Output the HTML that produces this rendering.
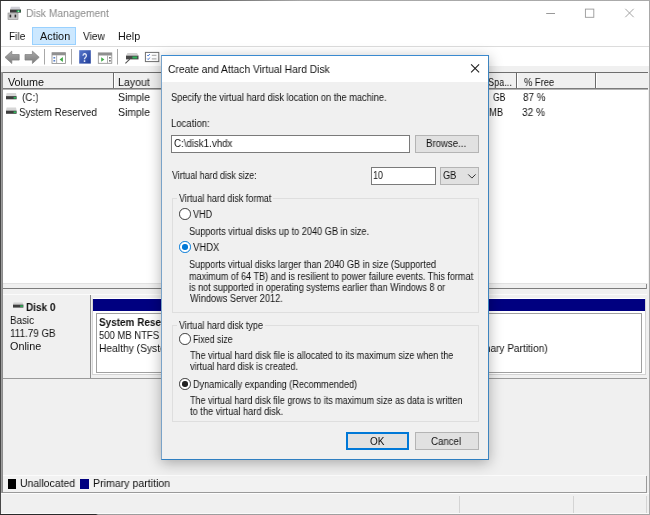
<!DOCTYPE html>
<html lang="en">
<head>
<meta charset="utf-8">
<title>Disk Management</title>
<style>
html,body{margin:0;padding:0}
body{width:650px;height:515px;position:relative;overflow:hidden;background:#f0f0f0;font-family:"Liberation Sans","DejaVu Sans",sans-serif;color:#111}
div,span,svg{position:absolute;box-sizing:border-box}
.t{white-space:pre;transform-origin:0 50%;color:#111;will-change:transform}
.a{left:0;top:0}
</style>
</head>
<body>
<!-- ===== main window chrome ===== -->
<div id="titlebar" style="left:0;top:0;width:650px;height:46px;background:#fff"></div>
<div id="menuline" style="left:0;top:46px;width:650px;height:1px;background:#dcdcdc"></div>
<div id="toolbar" style="left:0;top:47px;width:650px;height:19px;background:#fff"></div>
<div id="menuhi" style="left:32px;top:27px;width:44px;height:18px;background:#cce8ff;border:1px solid #99d1ff"></div>

<!-- title icon -->
<svg style="left:7px;top:6px" width="16" height="15" viewBox="0 0 16 15">
 <rect x="1" y="7" width="10" height="6.6" fill="#c9c9c9" stroke="#8d8d8d" stroke-width=".6"/>
 <rect x="2.6" y="8.6" width="1.6" height="2.8" fill="#333"/>
 <rect x="7.6" y="8.6" width="1.6" height="2.8" fill="#333"/>
 <path d="M3.9 .8h8.7l.9 2.8H3.2z" fill="#cfcfd6"/>
 <rect x="3" y="3.5" width="11" height="3.1" fill="#3c3c3c"/>
 <rect x="9.6" y="4.3" width="3.8" height="1.8" fill="#23a455"/>
 <rect x="10.8" y="4.7" width="1.2" height="1" fill="#d8ffe4"/>
</svg>

<!-- caption buttons -->
<svg style="left:540px;top:4px" width="100" height="18" viewBox="0 0 100 18">
 <path d="M6.2 9.5h8.8" stroke="#999" stroke-width="1" fill="none"/>
 <rect x="45.4" y="5.1" width="8.4" height="8.2" stroke="#999" stroke-width=".9" fill="none"/>
 <path d="M85.3 4.8l8.4 8.4M93.7 4.8l-8.4 8.4" stroke="#999" stroke-width=".9" fill="none"/>
</svg>

<!-- toolbar icons -->
<svg style="left:0;top:47px" width="165" height="20" viewBox="0 0 165 20">
 <defs>
  <linearGradient id="ga" x1="0" y1="0" x2="0" y2="1"><stop offset="0" stop-color="#a9a9a9"/><stop offset="1" stop-color="#7d7d7d"/></linearGradient>
  <linearGradient id="gq" x1="0" y1="0" x2="1" y2="1"><stop offset="0" stop-color="#5878cc"/><stop offset="1" stop-color="#1f3c98"/></linearGradient>
 </defs>
 <path d="M5 10.3l6.8-6.2v3.4h7.4v5.6h-7.4v3.4z" fill="url(#ga)" stroke="#808080" stroke-width=".7"/>
 <path d="M39.2 10.3l-6.8-6.2v3.4h-7.4v5.6h7.4v3.4z" fill="url(#ga)" stroke="#808080" stroke-width=".7"/>
 <rect x="44" y="2" width="1" height="15.5" fill="#a8a8a8"/>
 <rect x="71" y="2" width="1" height="15.5" fill="#a8a8a8"/>
 <rect x="117" y="2" width="1" height="15.5" fill="#a8a8a8"/>
 <!-- icon1 -->
 <rect x="52" y="5.7" width="13.5" height="10.8" fill="#fff" stroke="#8c8c8c" stroke-width=".8"/>
 <rect x="52" y="5.7" width="13.5" height="2.6" fill="#8f8f8f"/>
 <rect x="56.3" y="8.3" width=".8" height="8" fill="#9a9a9a"/>
 <rect x="53.4" y="10" width="1.8" height="1.6" fill="#5b83c8"/>
 <rect x="53.4" y="13" width="1.8" height="1.6" fill="#5b83c8"/>
 <path d="M59.6 12.4l3.3-2.5v5z" fill="#3fa846"/>
 <!-- help -->
 <rect x="79.2" y="3.2" width="11.6" height="13.4" fill="url(#gq)"/>
 <!-- icon2 -->
 <rect x="98.3" y="5.9" width="13.5" height="10.4" fill="#fff" stroke="#8c8c8c" stroke-width=".8"/>
 <rect x="98.3" y="5.9" width="13.5" height="2.6" fill="#8f8f8f"/>
 <rect x="107.2" y="8.5" width=".8" height="7.8" fill="#9a9a9a"/>
 <rect x="109.2" y="10" width="1.4" height="1.6" fill="#555"/>
 <rect x="109.2" y="13" width="1.4" height="1.6" fill="#555"/>
 <path d="M104.4 12.5l-3.2-2.3v4.6z" fill="#45ad4b"/>
 <!-- icon3 disk w/ tool -->
 <path d="M127.5 6h9.5l1.5 2.6h-12.5z" fill="#d0d0d0"/>
 <rect x="126" y="8.6" width="12.5" height="3.8" fill="#474747"/>
 <rect x="132.4" y="9.5" width="4.8" height="2" fill="#2fb45a"/>
 <path d="M125.4 16.4l4.4-4.2" stroke="#555" stroke-width="1.1" fill="none"/>
 <!-- icon4 checklist -->
 <rect x="145.4" y="5.4" width="13.4" height="9.2" fill="#fff" stroke="#6e6e6e" stroke-width="1"/>
 <path d="M147.2 8l1 1 1.6-2M147.2 11.6l1 1 1.6-2" stroke="#3b6fd1" stroke-width=".9" fill="none"/>
 <path d="M151.8 8.3h4.6M151.8 11.9h4.6" stroke="#9a9a9a" stroke-width=".9" fill="none"/>
</svg>

<!-- ===== volume list ===== -->
<div id="listbg" style="left:3px;top:89px;width:645px;height:194px;background:#fff"></div>
<div id="hdr" style="left:3px;top:72px;width:645px;height:17px;background:#f0f0f0;border-top:1px solid #6e6e6e;border-bottom:1px solid #7c7c7c"></div>
<div style="left:3px;top:89px;width:645px;height:1px;background:#b4b4b4"></div>
<div style="left:113px;top:73px;width:1px;height:15px;background:#6a6a6a"></div>
<div style="left:114px;top:73px;width:1px;height:15px;background:#fff"></div>
<div style="left:516px;top:73px;width:1px;height:15px;background:#6a6a6a"></div>
<div style="left:517px;top:73px;width:1px;height:15px;background:#fff"></div>
<div style="left:595px;top:73px;width:1px;height:15px;background:#6a6a6a"></div>
<div style="left:596px;top:73px;width:1px;height:15px;background:#fff"></div>

<!-- list disk icons -->
<svg style="left:5px;top:92px" width="13" height="24" viewBox="0 0 13 24">
 <g>
  <path d="M1.6 1.1h9.4l.6 3H1z" fill="#d6d6d6"/>
  <rect x="1" y="4.1" width="10.6" height="3.2" fill="#3e3e3e"/>
  <rect x="8.6" y="4.9" width="2.6" height="1.7" fill="#2fb45a"/>
 </g>
 <g transform="translate(0 14.5)">
  <path d="M1.6 1.1h9.4l.6 3H1z" fill="#d6d6d6"/>
  <rect x="1" y="4.1" width="10.6" height="3.2" fill="#3e3e3e"/>
  <rect x="8.6" y="4.9" width="2.6" height="1.7" fill="#2fb45a"/>
 </g>
</svg>

<!-- splitter & lower pane -->
<div style="left:3px;top:288px;width:644px;height:1px;background:#7c7c7c"></div>
<div style="left:646px;top:284px;width:1px;height:5px;background:#8a8a8a"></div>
<div style="left:3px;top:283px;width:644px;height:1px;background:#e2e2e2"></div>

<!-- disk label -->
<div style="left:3px;top:294px;width:644px;height:1px;background:#fbfbfb"></div>
<div style="left:3px;top:295px;width:88px;height:84px;background:#f0f0f0;border-right:1px solid #8c8c8c"></div>
<svg style="left:12px;top:301px" width="13" height="9" viewBox="0 0 13 9">
 <path d="M1.6 1.6h9l.6 2H1z" fill="#d0d0d0"/>
 <rect x="1" y="3.6" width="10.4" height="3" fill="#3e3e3e"/>
 <rect x="8.2" y="4.3" width="2.8" height="1.6" fill="#2fb45a"/>
</svg>

<!-- partition graphic -->
<div style="left:92px;top:298px;width:554px;height:77px;background:#fff;border:1px solid #d4d4d4;border-top-color:#fff"></div>
<div style="left:93px;top:299px;width:552px;height:12px;background:#000080"></div>
<div style="left:96px;top:313px;width:546px;height:60px;border:1px solid #a0a0a0;background:#fff"></div>
<div style="left:3px;top:378px;width:644px;height:1px;background:#9a9a9a"></div>

<!-- legend -->
<div style="left:3px;top:475px;width:643px;height:1px;background:#fbfbfb"></div>
<div style="left:3px;top:476px;width:643px;height:16px;background:#f2f2f2"></div>
<div style="left:3px;top:492px;width:644px;height:1px;background:#9a9a9a"></div>
<div style="left:646px;top:476px;width:1px;height:17px;background:#9a9a9a"></div>
<div style="left:8px;top:479px;width:8.4px;height:9.6px;background:#000"></div>
<div style="left:80px;top:479px;width:8.6px;height:9.6px;background:#000080"></div>

<!-- status bar -->
<div style="left:1px;top:493px;width:648px;height:1px;background:#fdfdfd"></div>
<div style="left:459px;top:496px;width:1px;height:17px;background:#d4d4d4"></div>
<div style="left:573px;top:496px;width:1px;height:17px;background:#d4d4d4"></div>
<div style="left:646px;top:496px;width:1px;height:17px;background:#d4d4d4"></div>

<!-- window borders -->
<div style="left:1px;top:72px;width:1px;height:421px;background:#9e9e9e"></div>
<div style="left:2px;top:72px;width:1px;height:421px;background:#8c8c8c"></div>
<div style="left:0;top:0;width:1px;height:515px;background:#484848"></div>
<div style="left:0;top:0;width:650px;height:1px;background:linear-gradient(90deg,#2e2e2e 0,#3a3a3a 150px,#a8a8a8 300px,#aaa 100%)"></div>
<div style="left:649px;top:0;width:1px;height:515px;background:#a8a8a8"></div>
<div style="left:1px;top:513px;width:648px;height:1px;background:#fafafa"></div>
<div style="left:0;top:514px;width:650px;height:1px;background:linear-gradient(90deg,#2a2a2a 0,#2a2a2a 96px,#9c9c9c 98px,#a4a4a4 100%)"></div>

<!-- main texts -->
<span class="t" style="left:26.00px;top:6px;font-size:10.8px;line-height:14px;transform:scaleX(0.9518);color:#8a8a8a">Disk Management</span>
<span class="t" style="left:82.00px;top:51px;font-size:12.6px;line-height:14px;transform:scaleX(0.6952);font-weight:700;color:#e6ebfa">?</span>
<span class="t" style="left:9.00px;top:29px;font-size:10.8px;line-height:14px;transform:scaleX(0.9350)">File</span>
<span class="t" style="left:40.00px;top:29px;font-size:10.8px;line-height:14px;transform:scaleX(1.0069)">Action</span>
<span class="t" style="left:83.00px;top:29px;font-size:10.8px;line-height:14px;transform:scaleX(0.9357)">View</span>
<span class="t" style="left:118.00px;top:29px;font-size:10.8px;line-height:14px;transform:scaleX(0.9830)">Help</span>
<span class="t" style="left:8.00px;top:75px;font-size:10.8px;line-height:14px;transform:scaleX(0.9912)">Volume</span>
<span class="t" style="left:118.00px;top:75px;font-size:10.8px;line-height:14px;transform:scaleX(0.9800)">Layout</span>
<span class="t" style="left:488.00px;top:75px;font-size:10.8px;line-height:14px;transform:scaleX(0.8447)">Spa...</span>
<span class="t" style="left:524.00px;top:75px;font-size:10.8px;line-height:14px;transform:scaleX(0.8681)">% Free</span>
<span class="t" style="left:22.00px;top:90px;font-size:10.8px;line-height:14px;transform:scaleX(0.9154)">(C:)</span>
<span class="t" style="left:118.00px;top:90px;font-size:10.8px;line-height:14px;transform:scaleX(0.9718)">Simple</span>
<span class="t" style="left:493.00px;top:90px;font-size:10.8px;line-height:14px;transform:scaleX(0.7890)">GB</span>
<span class="t" style="left:523.00px;top:90px;font-size:10.8px;line-height:14px;transform:scaleX(0.9173)">87 %</span>
<span class="t" style="left:19.00px;top:105px;font-size:10.8px;line-height:14px;transform:scaleX(0.9133)">System Reserved</span>
<span class="t" style="left:118.00px;top:105px;font-size:10.8px;line-height:14px;transform:scaleX(0.9718)">Simple</span>
<span class="t" style="left:489.00px;top:105px;font-size:10.8px;line-height:14px;transform:scaleX(0.8748)">MB</span>
<span class="t" style="left:522.00px;top:105px;font-size:10.8px;line-height:14px;transform:scaleX(0.9348)">32 %</span>
<span class="t" style="left:26.00px;top:300px;font-size:10.8px;line-height:14px;transform:scaleX(0.9275);font-weight:700">Disk 0</span>
<span class="t" style="left:10.00px;top:313px;font-size:10.8px;line-height:14px;transform:scaleX(0.9117)">Basic</span>
<span class="t" style="left:10.00px;top:326px;font-size:10.8px;line-height:14px;transform:scaleX(0.9108)">111.79 GB</span>
<span class="t" style="left:10.00px;top:339px;font-size:10.8px;line-height:14px;transform:scaleX(0.9913)">Online</span>
<span class="t" style="left:99.00px;top:315px;font-size:10.8px;line-height:14px;transform:scaleX(0.9214);font-weight:700">System Reserved</span>
<span class="t" style="left:99.00px;top:328px;font-size:10.8px;line-height:14px;transform:scaleX(0.8783)">500 MB NTFS</span>
<span class="t" style="left:99.00px;top:341px;font-size:10.8px;line-height:14px;transform:scaleX(0.9506)">Healthy (System, Active, Primary Partition)</span>
<span class="t" style="left:429.00px;top:341px;font-size:10.8px;line-height:14px;transform:scaleX(0.9379)">Healthy (Primary Partition)</span>
<span class="t" style="left:20.00px;top:476px;font-size:10.8px;line-height:14px;transform:scaleX(0.9673)">Unallocated</span>
<span class="t" style="left:93.00px;top:476px;font-size:10.8px;line-height:14px;transform:scaleX(0.9810)">Primary partition</span>

<!-- ===== dialog ===== -->
<div id="dlg" style="left:161px;top:55px;width:328px;height:405px;background:#f0f0f0;box-shadow:0 3px 13px 0 rgba(0,0,0,.30)">
 <div style="left:0;top:0;width:328px;height:27px;background:#fff"></div>
 <svg style="left:308px;top:8px" width="12" height="12" viewBox="0 0 12 12"><path d="M2.1 1.3l8 8M10.1 1.3l-8 8" stroke="#1a1a1a" stroke-width="1.05" fill="none"/></svg>

 <!-- location input -->
 <div style="left:10px;top:80px;width:239px;height:18px;background:#fff;border:1px solid #7a7a7a"></div>
 <div style="left:254px;top:80px;width:64px;height:18px;background:#e1e1e1;border:1px solid #b4b4b4"></div>
 <!-- size input + combo -->
 <div style="left:210px;top:112px;width:65px;height:18px;background:#fff;border:1px solid #7a7a7a"></div>
 <div style="left:279px;top:112px;width:39px;height:18px;background:#e1e1e1;border:1px solid #b4b4b4"></div>
 <svg style="left:306px;top:118px" width="10" height="7" viewBox="0 0 10 7"><path d="M1.2 1.4l3.7 3.7 3.7-3.7" stroke="#333" stroke-width="1" fill="none"/></svg>

 <!-- group 1 -->
 <div style="left:11px;top:143px;width:307px;height:115px;border:1px solid #dedede"></div>
 <div style="left:16px;top:139px;width:96px;height:10px;background:#f0f0f0"></div>
 <!-- group 2 -->
 <div style="left:11px;top:270px;width:307px;height:97px;border:1px solid #dedede"></div>
 <div style="left:16px;top:266px;width:88px;height:10px;background:#f0f0f0"></div>

 <!-- radios -->
 <div style="left:18.2px;top:153.2px;width:11.6px;height:11.6px;border-radius:50%;background:#fff;border:1px solid #3a3a3a"></div>
 <div style="left:18.2px;top:186.2px;width:11.6px;height:11.6px;border-radius:50%;background:#fff;border:1px solid #0078d7"></div>
 <div style="left:21.3px;top:189.3px;width:5.4px;height:5.4px;border-radius:50%;background:#0078d7"></div>
 <div style="left:18.2px;top:278.4px;width:11.6px;height:11.6px;border-radius:50%;background:#fff;border:1px solid #3a3a3a"></div>
 <div style="left:18.2px;top:323.2px;width:11.6px;height:11.6px;border-radius:50%;background:#fff;border:1px solid #3a3a3a"></div>
 <div style="left:21.3px;top:326.3px;width:5.4px;height:5.4px;border-radius:50%;background:#222"></div>

 <!-- buttons -->
 <div style="left:185px;top:377px;width:63px;height:18px;background:#e1e1e1;border:2px solid #0078d7"></div>
 <div style="left:254px;top:377px;width:64px;height:18px;background:#e1e1e1;border:1px solid #b4b4b4"></div>

 <!-- dialog texts -->
<span class="t" style="left:7.00px;top:7px;font-size:10.8px;line-height:14px;transform:scaleX(0.9498)">Create and Attach Virtual Hard Disk</span>
<span class="t" style="left:10.00px;top:36px;font-size:10px;line-height:14px;transform:scaleX(0.9236)">Specify the virtual hard disk location on the machine.</span>
<span class="t" style="left:10.00px;top:62px;font-size:10px;line-height:14px;transform:scaleX(0.9545)">Location:</span>
<span class="t" style="left:13.00px;top:82px;font-size:10px;line-height:14px;transform:scaleX(0.9719)">C:\disk1.vhdx</span>
<span class="t" style="left:265.00px;top:82px;font-size:10px;line-height:14px;transform:scaleX(0.9622)">Browse...</span>
<span class="t" style="left:11.00px;top:114px;font-size:10px;line-height:14px;transform:scaleX(0.8922)">Virtual hard disk size:</span>
<span class="t" style="left:212.00px;top:114px;font-size:10px;line-height:14px;transform:scaleX(0.8985)">10</span>
<span class="t" style="left:282.00px;top:114px;font-size:10px;line-height:14px;transform:scaleX(0.9226)">GB</span>
<span class="t" style="left:18.00px;top:137px;font-size:10px;line-height:14px;transform:scaleX(0.8994)">Virtual hard disk format</span>
<span class="t" style="left:32.00px;top:153px;font-size:10px;line-height:14px;transform:scaleX(0.9029)">VHD</span>
<span class="t" style="left:28.00px;top:170px;font-size:10px;line-height:14px;transform:scaleX(0.9180)">Supports virtual disks up to 2040 GB in size.</span>
<span class="t" style="left:32.00px;top:186px;font-size:10px;line-height:14px;transform:scaleX(0.9458)">VHDX</span>
<span class="t" style="left:28.00px;top:203px;font-size:10px;line-height:14px;transform:scaleX(0.9103)">Supports virtual disks larger than 2040 GB in size (Supported</span>
<span class="t" style="left:28.00px;top:215px;font-size:10px;line-height:14px;transform:scaleX(0.9090)">maximum of 64 TB) and is resilient to power failure events. This format</span>
<span class="t" style="left:28.00px;top:226px;font-size:10px;line-height:14px;transform:scaleX(0.9089)">is not supported in operating systems earlier than Windows 8 or</span>
<span class="t" style="left:29.00px;top:237px;font-size:10px;line-height:14px;transform:scaleX(0.9226)">Windows Server 2012.</span>
<span class="t" style="left:18.00px;top:264px;font-size:10px;line-height:14px;transform:scaleX(0.9002)">Virtual hard disk type</span>
<span class="t" style="left:32.00px;top:278px;font-size:10px;line-height:14px;transform:scaleX(0.8783)">Fixed size</span>
<span class="t" style="left:29.00px;top:294px;font-size:10px;line-height:14px;transform:scaleX(0.9007)">The virtual hard disk file is allocated to its maximum size when the</span>
<span class="t" style="left:29.00px;top:305px;font-size:10px;line-height:14px;transform:scaleX(0.9085)">virtual hard disk is created.</span>
<span class="t" style="left:32.00px;top:323px;font-size:10px;line-height:14px;transform:scaleX(0.9113)">Dynamically expanding (Recommended)</span>
<span class="t" style="left:29.00px;top:339px;font-size:10px;line-height:14px;transform:scaleX(0.8977)">The virtual hard disk file grows to its maximum size as data is written</span>
<span class="t" style="left:29.00px;top:350px;font-size:10px;line-height:14px;transform:scaleX(0.9256)">to the virtual hard disk.</span>
<span class="t" style="left:209.00px;top:380px;font-size:10px;line-height:14px;transform:scaleX(0.9739)">OK</span>
<span class="t" style="left:270.00px;top:380px;font-size:10px;line-height:14px;transform:scaleX(0.9677)">Cancel</span>
 <div style="left:0;top:0;width:328px;height:405px;border:1px solid #2f7fc1;border-left-color:#7aa3c8;border-top-color:#3a8ad0;border-right-color:#3d84bf"></div>
</div>
</body>
</html>
